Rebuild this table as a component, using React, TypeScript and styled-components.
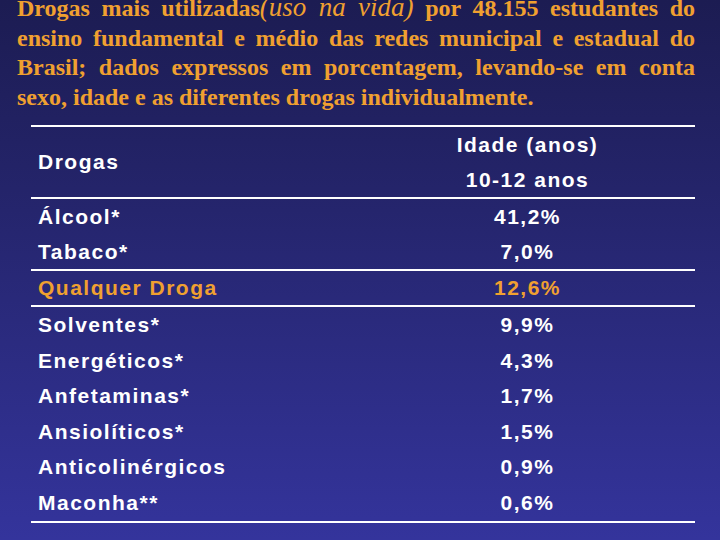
import React from "react";
import styled, { createGlobalStyle } from "styled-components";

const Global = createGlobalStyle`
  html, body { margin: 0; padding: 0; background: #2a2a80; }
  * { box-sizing: border-box; }
`;

const Slide = styled.div`
  width: 720px;
  height: 540px;
  overflow: hidden;
  background: linear-gradient(180deg, #1c1c52 0%, #24246a 35%, #34349c 100%);
  display: flex;
  flex-direction: column;
`;

const Title = styled.p`
  margin: -6px 25px 0 17px;
  font-family: "Liberation Serif", "Times New Roman", serif;
  font-weight: bold;
  font-size: 24px;
  line-height: 29.6px;
  color: #f0a030;
  text-align: justify;
`;

const Italic = styled.span`
  font-style: italic;
  font-weight: normal;
  font-size: 27px;
  line-height: 1;
`;

const Table = styled.div`
  margin: 12.6px 0 0 31px;
  width: 664px;
  font-family: "Liberation Sans", Arial, sans-serif;
  font-weight: bold;
  font-size: 21px;
  letter-spacing: 1.5px;
  color: #ffffff;
`;

const Rule = styled.div`
  height: 2px;
  background: #ffffff;
`;

const Header = styled.div`
  display: grid;
  grid-template-columns: 329px 335px;
  height: 70px;
  align-items: center;
`;

const HeadLeft = styled.div`
  padding-left: 7px;
`;

const HeadRight = styled.div`
  display: flex;
  flex-direction: column;
  align-items: center;
  line-height: 35px;
`;

const Row = styled.div<{ $h: number; $accent?: boolean }>`
  display: grid;
  grid-template-columns: 329px 335px;
  height: ${(p) => p.$h}px;
  line-height: ${(p) => p.$h}px;
  color: ${(p) => (p.$accent ? "#f0a030" : "#ffffff")};
`;

const Name = styled.div`
  padding-left: 7px;
  white-space: nowrap;
`;

const Value = styled.div`
  text-align: center;
`;

type Item = { name: string; value: string };

const groups: { h: number; accent?: boolean; items: Item[] }[] = [
  {
    h: 35,
    items: [
      { name: "Álcool*", value: "41,2%" },
      { name: "Tabaco*", value: "7,0%" },
    ],
  },
  { h: 34, accent: true, items: [{ name: "Qualquer Droga", value: "12,6%" }] },
  {
    h: 35.6,
    items: [
      { name: "Solventes*", value: "9,9%" },
      { name: "Energéticos*", value: "4,3%" },
      { name: "Anfetaminas*", value: "1,7%" },
      { name: "Ansiolíticos*", value: "1,5%" },
      { name: "Anticolinérgicos", value: "0,9%" },
      { name: "Maconha**", value: "0,6%" },
    ],
  },
];

export default function App() {
  return (
    <>
      <Global />
      <Slide>
        <Title>
          Drogas mais utilizadas<Italic>(uso na vida)</Italic> por 48.155 estudantes do
          ensino fundamental e médio das redes municipal e estadual do Brasil; dados
          expressos em porcentagem, levando-se em conta sexo, idade e as diferentes
          drogas individualmente.
        </Title>
        <Table>
          <Rule />
          <Header>
            <HeadLeft>Drogas</HeadLeft>
            <HeadRight>
              <span>Idade (anos)</span>
              <span>10-12 anos</span>
            </HeadRight>
          </Header>
          {groups.map((g, gi) => (
            <React.Fragment key={gi}>
              <Rule />
              {g.items.map((it) => (
                <Row key={it.name} $h={g.h} $accent={g.accent}>
                  <Name>{it.name}</Name>
                  <Value>{it.value}</Value>
                </Row>
              ))}
            </React.Fragment>
          ))}
          <Rule />
        </Table>
      </Slide>
    </>
  );
}
